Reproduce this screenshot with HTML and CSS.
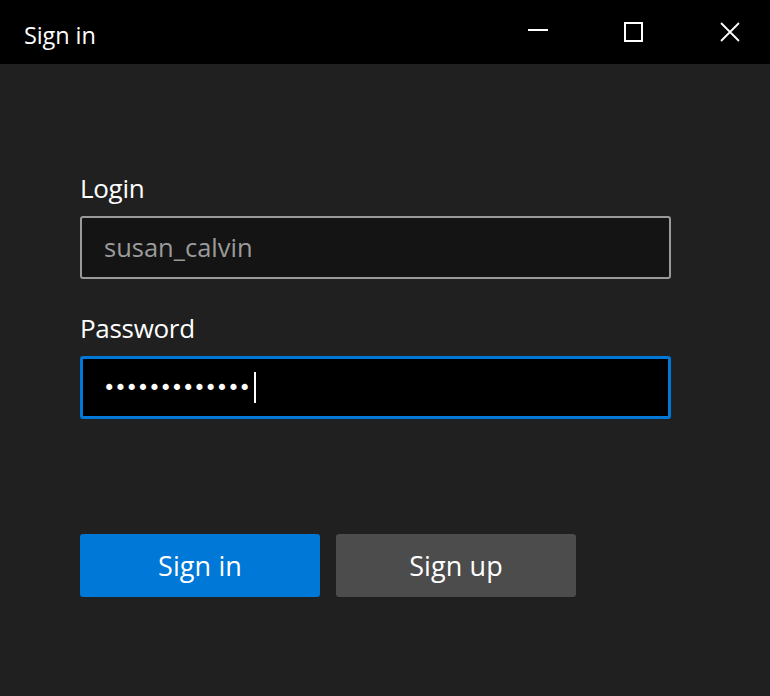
FILE: index.html
```html
<!DOCTYPE html>
<html lang="en">
<head>
<meta charset="utf-8">
<title>Sign in</title>
<link rel="stylesheet" href="styles.css">
</head>
<body>
<div class="window">
  <header class="titlebar">
    <span class="title">Sign in</span>
    <div class="controls">
      <svg class="ctl" width="20" height="20" viewBox="0 0 20 20"><rect x="0" y="7" width="20" height="2" fill="#fff"/></svg>
      <svg class="ctl" width="20" height="20" viewBox="0 0 20 20"><rect x="1" y="1" width="17" height="18" fill="none" stroke="#fff" stroke-width="2"/></svg>
      <svg class="ctl" width="20" height="20" viewBox="0 0 20 20"><path d="M1 1 L19 19 M19 1 L1 19" stroke="#fff" stroke-width="1.8" fill="none"/></svg>
    </div>
  </header>
  <main class="content">
    <div class="field">
      <label class="label">Login</label>
      <div class="input input-normal"><span class="value">susan_calvin</span></div>
    </div>
    <div class="field">
      <label class="label">Password</label>
      <div class="input input-focus"><span class="dots">•••••••••••••</span><span class="caret"></span></div>
    </div>
    <div class="buttons">
      <button class="btn btn-primary">Sign in</button>
      <button class="btn btn-secondary">Sign up</button>
    </div>
  </main>
</div>
</body>
</html>
```
FILE: styles.css
```css
* { box-sizing: border-box; }
html, body { margin: 0; padding: 0; }
body {
  width: 770px;
  height: 696px;
  background: #202020;
  font-family: "Open Sans", "Noto Sans", sans-serif;
  color: #fff;
  overflow: hidden;
}
.window { display: flex; flex-direction: column; height: 696px; }
.titlebar {
  height: 64px;
  background: #000;
  display: flex;
  align-items: center;
  justify-content: space-between;
  padding-left: 24px;
  padding-right: 30px;
}
.title { font-size: 23.5px; font-weight: 400; letter-spacing: -0.1px; padding-top: 6px; }
.controls { display: flex; gap: 76px; align-items: center; }
.ctl { display: block; }
.content { padding: 108px 99px 0 80px; }
.field { display: flex; flex-direction: column; margin-bottom: 33px; }
.label { font-size: 26px; line-height: 32px; margin-bottom: 12px; letter-spacing: -0.3px; }
.input {
  height: 63px;
  border-radius: 3px;
  display: flex;
  align-items: center;
}
.input-normal { background: #141414; border: 2px solid #9a9a9a; padding-left: 22px; }
.input-normal .value { color: #9b9b9b; font-size: 25.5px; letter-spacing: 0; padding-bottom: 2px; }
.input-focus { background: #000; border: 3px solid #0078d7; padding-left: 20px; }
.dots { font-family: "DejaVu Sans", sans-serif; font-size: 21px; letter-spacing: -1.1px; color: #fff; }
.caret { display: block; width: 2px; height: 31px; background: #fff; margin-left: 4px; }
.buttons { display: flex; gap: 16px; margin-top: 115px; }
.btn {
  width: 240px;
  height: 63px;
  border: none;
  border-radius: 3px;
  color: #fff;
  font-family: "Open Sans", "Noto Sans", sans-serif;
  font-size: 27px;
  letter-spacing: 0.1px;
  padding: 0;
}
.btn-primary { background: #0078d7; }
.btn-secondary { background: #4c4c4c; }
```
